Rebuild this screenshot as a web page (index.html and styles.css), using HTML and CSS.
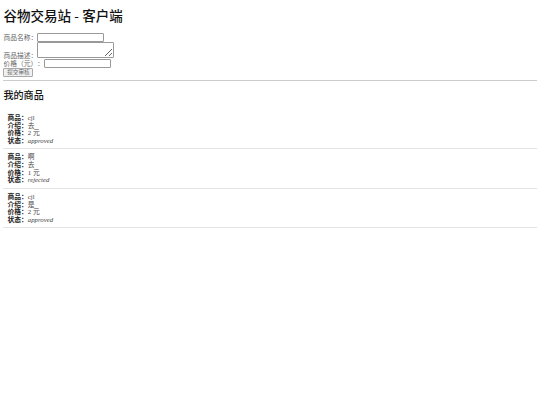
FILE: index.html
```html
<!DOCTYPE html>
<html lang="zh-CN">

<head>
    <meta charset="UTF-8" />
    <title>谷物交易站 - 客户端</title>
    <link rel="stylesheet" href="styles.css">
</head>

<body>
    <h1>谷物交易站 - 客户端</h1>
    <form class="goods-form">
        <label for="name">商品名称：</label><input type="text" id="name" class="field" /><br />
        <label for="desc">商品描述：</label><textarea id="desc" class="field-area"></textarea><br />
        <label for="price">价格（元）：</label><input type="number" id="price" class="field" /><br />
        <button type="button" class="submit-btn">提交审核</button>
    </form>
    <hr class="divider" />
    <h2>我的商品</h2>
    <ul class="goods-list">
        <li class="goods-item">
            <strong>商品：</strong>cjl<br />
            <strong>介绍：</strong>去<br />
            <strong>价格：</strong>2 元<br />
            <strong>状态：</strong><em>approved</em>
        </li>
        <li class="goods-item">
            <strong>商品：</strong>啊<br />
            <strong>介绍：</strong>去<br />
            <strong>价格：</strong>1 元<br />
            <strong>状态：</strong><em>rejected</em>
        </li>
        <li class="goods-item">
            <strong>商品：</strong>cjl<br />
            <strong>介绍：</strong>是<br />
            <strong>价格：</strong>2 元<br />
            <strong>状态：</strong><em>approved</em>
        </li>
    </ul>
</body>

</html>
```

FILE: styles.css
```css
body {
    font-family: "Liberation Serif", "Noto Sans CJK SC", serif;
    font-size: 6.75px;
    line-height: 7.6px;
    color: #444;
    background: #fff;
    margin: 3.4px;
    text-spacing-trim: space-all;
}

h1 {
    font-size: 13.5px;
    font-weight: 500;
    line-height: 15.5px;
    color: #111;
    margin: 6px 0 8px;
}

h2 {
    font-size: 10.1px;
    font-weight: 500;
    line-height: 11.5px;
    color: #111;
    margin: 8.4px 0 8.4px;
}

.goods-form label {
    color: #666;
}

.field {
    width: 67px;
    height: 9px;
    box-sizing: border-box;
    padding: 0;
    border: 0.6px solid #999;
    border-radius: 1px;
    font-size: 5.6px;
    vertical-align: baseline;
}

.field-area {
    width: 77px;
    height: 16px;
    box-sizing: border-box;
    padding: 0;
    border: 0.6px solid #999;
    border-radius: 1px;
    font-size: 5.6px;
    vertical-align: baseline;
}

.submit-btn {
    width: 30px;
    height: 9px;
    box-sizing: border-box;
    padding: 0;
    font-family: inherit;
    font-size: 5.6px;
    line-height: 7px;
    color: #666;
    background: #f0f0f0;
    border: 0.6px solid #aaa;
    border-radius: 1px;
    display: block;
}

.divider {
    margin: 3px 0 0;
    border: 0;
    border-top: 1px solid #ccc;
}

.goods-list {
    list-style: none;
    margin: 0;
    padding: 0;
}

.goods-item {
    padding: 4.2px 4.2px 4.6px;
    height: 39.5px;
    box-sizing: border-box;
    border-bottom: 1px solid #e4e4e4;
}

.goods-item strong {
    color: #222;
    font-weight: 600;
}
```
